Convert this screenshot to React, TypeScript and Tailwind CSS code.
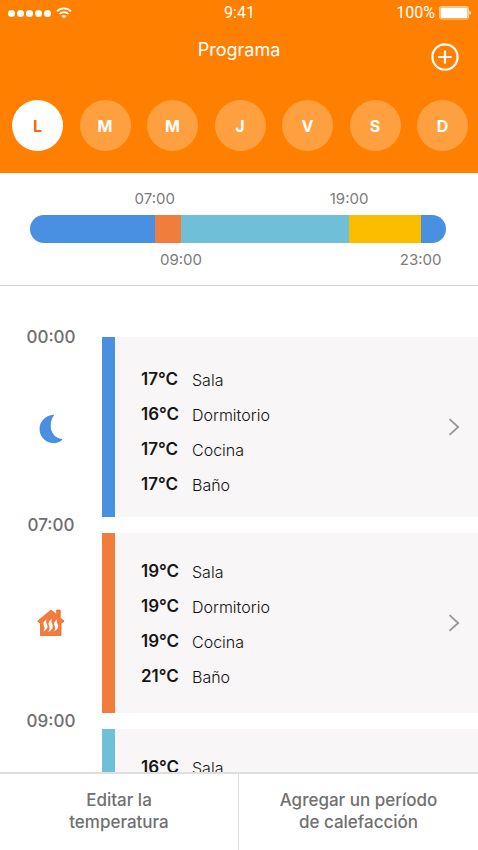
import { useState } from "react";

type Room = { name: string; temp: number };

type Period = {
  start: string;
  color: string;
  icon: "moon" | "house" | "none";
  rooms: Room[];
};

const days = [
  { id: "lunes", letter: "L" },
  { id: "martes", letter: "M" },
  { id: "miércoles", letter: "M" },
  { id: "jueves", letter: "J" },
  { id: "viernes", letter: "V" },
  { id: "sábado", letter: "S" },
  { id: "domingo", letter: "D" },
];

// width is the share of the day bar, in percent
const segments = [
  { width: 30, color: "bg-[#4a90e2]", top: "", bottom: "" },
  { width: 6.3, color: "bg-[#f07d3b]", top: "07:00", bottom: "" },
  { width: 40.4, color: "bg-[#70bfd8]", top: "", bottom: "09:00" },
  { width: 17.2, color: "bg-[#fcbc00]", top: "19:00", bottom: "" },
  { width: 6.1, color: "bg-[#4a90e2]", top: "", bottom: "23:00" },
];

const periods: Period[] = [
  {
    start: "00:00",
    color: "bg-[#4a90e2]",
    icon: "moon",
    rooms: [
      { name: "Sala", temp: 17 },
      { name: "Dormitorio", temp: 16 },
      { name: "Cocina", temp: 17 },
      { name: "Baño", temp: 17 },
    ],
  },
  {
    start: "07:00",
    color: "bg-[#f07d3b]",
    icon: "house",
    rooms: [
      { name: "Sala", temp: 19 },
      { name: "Dormitorio", temp: 19 },
      { name: "Cocina", temp: 19 },
      { name: "Baño", temp: 21 },
    ],
  },
  {
    start: "09:00",
    color: "bg-[#70bfd8]",
    icon: "none",
    rooms: [{ name: "Sala", temp: 16 }],
  },
];

const WifiIcon = () => (
  <svg width="16" height="12" viewBox="0 0 16 12" fill="none" stroke="white" strokeWidth="1.7">
    <path d="M1 4.4C5 .4 11 .4 15 4.4" />
    <path d="M3.5 7C6 4.5 10 4.5 12.5 7" />
    <path d="M5.6 9 8 11.6 10.4 9C9 7.7 7 7.7 5.6 9Z" fill="white" stroke="none" />
  </svg>
);

const BatteryIcon = () => (
  <svg width="32" height="14" viewBox="0 0 32 14">
    <rect x=".5" y=".5" width="29" height="12.5" rx="2" fill="none" stroke="#ffd09c" />
    <rect x="1.5" y="1.5" width="27" height="10.5" rx="1" fill="white" />
    <path d="M30.5 4.8c1.8.6 1.8 3.6 0 4.2Z" fill="white" />
  </svg>
);

const PlusIcon = () => (
  <svg width="28" height="28" viewBox="0 0 28 28" fill="none" stroke="white" strokeWidth="2.2">
    <circle cx="14" cy="14" r="12.6" />
    <path d="M14 7.4v13.2M7.4 14h13.2" />
  </svg>
);

const MoonIcon = () => (
  <svg width="24" height="30" viewBox="0 0 24 30" fill="#4a90e2" stroke="#2f7ddd" strokeWidth=".8">
    <path d="M14.600 1.200C6.800 1.700 1 7.500 1 14.800 1 22.800 7 28.600 14.200 28.600c3.700 0 6.600-1 8.900-3.200C16 24.800 11.200 19 11.200 11.800c0-4.200 1.200-7.600 3.400-10.600Z" />
  </svg>
);

const HouseIcon = () => (
  <svg width="28" height="28" viewBox="0 0 28 28">
    <path
      d="M14 1 19.700 5.800V1H23.200v7.800L27 12 25.800 13.600H24V26.500H3.500V13.600H2L.8 12Z"
      fill="#f07d3b"
      stroke="#ee6a1c"
      strokeWidth=".8"
    />
    <g fill="white">
      <path d="M9.600 10.200c-5.200 4-2.600 5.800-2.200 7.700.3 1.500-.1 2.900-1.200 4.800 5-3.200 4.700-5.300 3.700-7.500-.7-1.600-1.200-2.800-.3-5Z" />
      <path d="M15 9.800c-5.600 4.200-2.900 6.100-2.500 8.200.3 1.700-.1 3.200-1.300 5.400 5.400-3.500 5.100-6 4-8.300-.8-1.700-1.200-3-.2-5.300Z" />
      <path d="M20.300 10.200c-5.200 4-2.600 5.800-2.200 7.700.3 1.500-.1 2.900-1.200 4.800 5-3.200 4.700-5.300 3.700-7.500-.7-1.600-1.200-2.800-.3-5Z" />
    </g>
  </svg>
);

const ChevronIcon = () => (
  <svg width="12" height="18" viewBox="0 0 12 18" fill="none" stroke="#969696" strokeWidth="1.8">
    <path d="M1.500 1.200 10.200 9 1.500 16.800" />
  </svg>
);

const TickRow = ({ side }: { side: "top" | "bottom" }) => (
  <div className="flex h-5">
    {segments.map((segment, i) => (
      <div key={i} className="flex" style={{ width: `${segment.width}%` }}>
        <span className="flex w-0 justify-center">{segment[side]}</span>
      </div>
    ))}
  </div>
);

const PeriodRow = ({ period }: { period: Period }) => (
  <li className="group flex">
    <div className="flex w-[102px] flex-col items-center">
      <h2 className="-mt-5 h-6 text-[17px] leading-6 font-medium text-[#6e6e6e] group-first:-mt-3">
        {period.start}
      </h2>
      <div className="flex flex-1 items-center pb-1 group-first:pb-2">
        {period.icon === "moon" && <MoonIcon />}
        {period.icon === "house" && <HouseIcon />}
      </div>
    </div>
    <div className={`w-[13px] ${period.color}`} />
    <div className="flex h-[180px] flex-1 items-center bg-[#f8f6f7] pr-[18px] pl-[26px]">
      <dl className="flex-1 self-start pt-[21px] group-first:pt-[25px]">
        {period.rooms.map((room) => (
          <div key={room.name} className="flex h-[35px] items-center">
            <dt className="order-2 text-base font-light text-[#111]">{room.name}</dt>
            <dd className="w-[51px] text-[17px] font-semibold text-[#161616]">{room.temp}°C</dd>
          </div>
        ))}
      </dl>
      <button type="button" aria-label={`Editar ${period.start}`}>
        <ChevronIcon />
      </button>
    </div>
  </li>
);

const App = () => {
  const [selected, setSelected] = useState("lunes");

  return (
    <div className="flex h-screen flex-col overflow-hidden bg-white font-['Inter',sans-serif]">
      <header className="bg-[#ff8000] pb-[22px] text-white">
        <div className="grid h-6 grid-cols-3 items-center pr-[7px] pl-2 pt-px font-['Roboto',sans-serif] text-base">
          <div className="flex items-center gap-[5px]">
            <div className="flex gap-[2px]">
              {[1, 2, 3, 4, 5].map((dot) => (
                <span key={dot} className="h-[7px] w-[7px] rounded-full bg-white" />
              ))}
            </div>
            <WifiIcon />
          </div>
          <span className="text-center">9:41</span>
          <div className="flex items-center justify-end gap-1">
            <span>100%</span>
            <BatteryIcon />
          </div>
        </div>

        <div className="grid h-[76px] grid-cols-[1fr_auto_1fr] items-start px-[19px] pt-3">
          <h1 className="col-start-2 text-lg leading-7">Programa</h1>
          <button type="button" aria-label="Agregar" className="mt-[7px] justify-self-end">
            <PlusIcon />
          </button>
        </div>

        <div className="flex justify-between pr-[10px] pl-3">
          {days.map((day) => (
            <button
              key={day.id}
              type="button"
              aria-label={day.id}
              aria-pressed={selected === day.id}
              onClick={() => setSelected(day.id)}
              className={`h-[51px] w-[51px] rounded-full text-base font-bold ${
                selected === day.id ? "bg-white text-[#f0691c]" : "bg-[#ffa040] text-white"
              }`}
            >
              {day.letter}
            </button>
          ))}
        </div>
      </header>

      <section className="border-b border-[#d4d4d4] pt-4 pr-8 pb-[15px] pl-[30px] text-[15px] leading-5 text-[#7b7b7b]">
        <TickRow side="top" />
        <div className="mt-[6px] mb-[7px] flex h-7 overflow-hidden rounded-full">
          {segments.map((segment, i) => (
            <div key={i} className={segment.color} style={{ width: `${segment.width}%` }} />
          ))}
        </div>
        <TickRow side="bottom" />
      </section>

      <main className="min-h-0 flex-1 overflow-y-auto pt-[51px] [scrollbar-width:none]">
        <ul className="flex flex-col gap-4">
          {periods.map((period) => (
            <PeriodRow key={period.start} period={period} />
          ))}
        </ul>
      </main>

      <footer className="grid h-[78px] grid-cols-2 border-t-2 border-[#dedede] text-[17px] leading-[22px] font-medium text-[#707070]">
        <button type="button" className="border-r border-[#dedede] pb-[2px]">
          Editar la
          <br />
          temperatura
        </button>
        <button type="button" className="pb-[2px]">
          Agregar un período
          <br />
          de calefacción
        </button>
      </footer>
    </div>
  );
};

export default App;
